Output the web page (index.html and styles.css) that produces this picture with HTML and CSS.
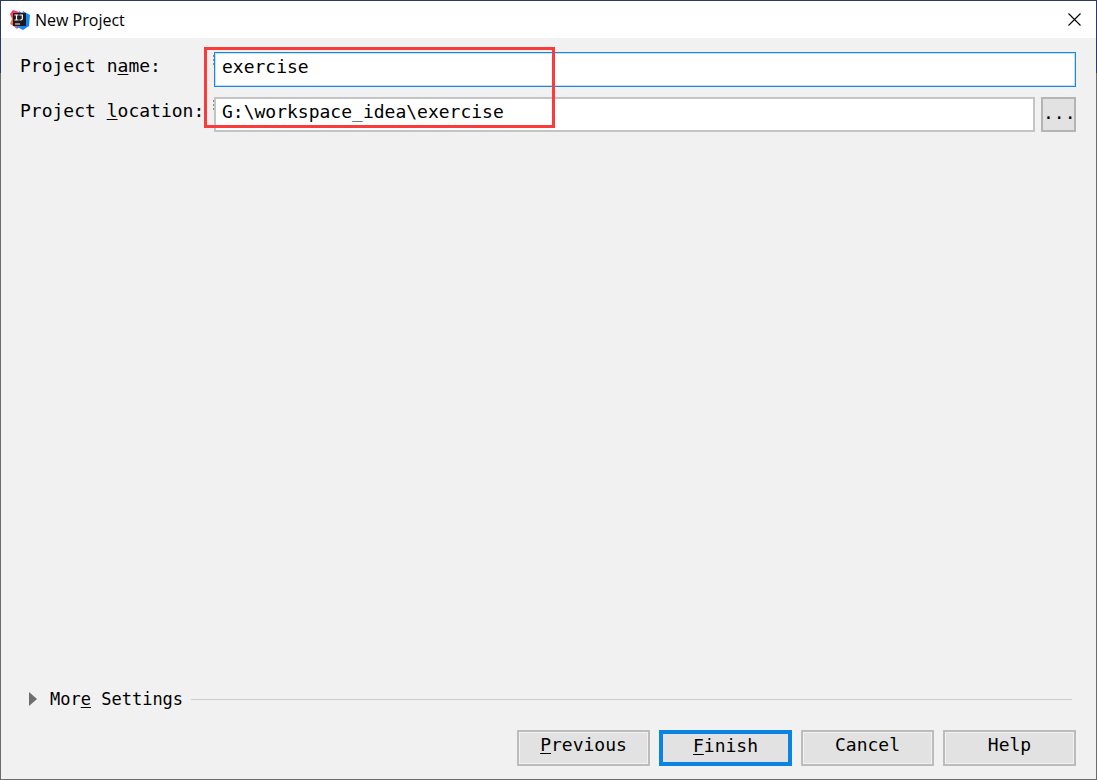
FILE: index.html
```html
<!DOCTYPE html>
<html lang="en">
<head>
  <meta charset="UTF-8">
  <title>New Project</title>
  <meta name="viewport" content="width=device-width, initial-scale=1.0">
  <link rel="stylesheet" href="styles.css">
</head>

<body>
  <div class="window">
    <header class="titlebar">
      <svg class="logo" width="20" height="20" viewBox="0 0 20 20" xmlns="http://www.w3.org/2000/svg">
        <defs>
          <linearGradient id="warm" x1="0" y1="0" x2="0" y2="1">
            <stop offset="0" stop-color="#f0317c" />
            <stop offset="0.45" stop-color="#f8543f" />
            <stop offset="1" stop-color="#fc9a2c" />
          </linearGradient>
          <linearGradient id="cool" x1="0" y1="0" x2="1" y2="1">
            <stop offset="0" stop-color="#2b9cf4" />
            <stop offset="1" stop-color="#087cfa" />
          </linearGradient>
        </defs>
        <path d="M3 0 L9 2 L9 18 L4 16 L0 14 L2 9 L0 4 Z" fill="url(#warm)" />
        <path d="M1 14 L4 13 L10 16 L7 19 Z" fill="#e0558c" />
        <path d="M13 1 L20 5 L19 16 L13 20 L7 17 Z" fill="url(#cool)" />
        <path d="M9 1 L14 4 L9 4 Z" fill="#7d60c9" />
        <rect x="3" y="3" width="13" height="13" fill="#1b1b20" />
        <path d="M4.5 5 H8.5 M6.5 5 V10 M4.5 10 H8.5 M9.5 5 H13 M12.3 5 V8.6 Q12.3 10 10.8 10 H9.5 M5 14 H10" fill="none" stroke="#fff" stroke-width="1.2" />
      </svg>
      <h1>New Project</h1>
      <button type="button" class="close" aria-label="Close">
        <svg width="13" height="13" viewBox="0 0 13 13" xmlns="http://www.w3.org/2000/svg">
          <path d="M0.5 0.5 L12.5 12.5 M12.5 0.5 L0.5 12.5" stroke="#000" stroke-width="1.1" />
        </svg>
      </button>
    </header>

    <form class="content">
      <div class="fields">
        <div class="row">
          <label for="projectName">Project n<u>a</u>me:</label>
          <div class="field">
            <input type="text" id="projectName" class="active" value="exercise">
          </div>
        </div>
        <div class="row">
          <label for="projectLocation">Project <u>l</u>ocation:</label>
          <div class="field">
            <input type="text" id="projectLocation" value="G:\workspace_idea\exercise">
            <button type="button" class="browse" aria-label="Browse">...</button>
          </div>
        </div>
        <div class="highlight"></div>
      </div>

      <div class="more">
        <button type="button" class="more-toggle">
          <svg width="8" height="14" viewBox="0 0 8 14" xmlns="http://www.w3.org/2000/svg">
            <path d="M0 0 L8 7 L0 14 Z" fill="#6e6e6e" />
          </svg>
          <span>Mor<u>e</u> Settings</span>
        </button>
        <div class="line"></div>
      </div>

      <footer class="buttons">
        <button type="button" class="btn"><u>P</u>revious</button>
        <button type="submit" class="btn primary"><u>F</u>inish</button>
        <button type="button" class="btn">Cancel</button>
        <button type="button" class="btn">Help</button>
      </footer>
    </form>
  </div>
</body>
</html>
```
FILE: styles.css
```css
* {
  margin: 0;
  padding: 0;
  box-sizing: border-box;
}
body {
  font-family: "DejaVu Sans Mono", monospace;
  font-size: 18px;
  line-height: 24px;
  color: #000;
}
button, input {
  font: inherit;
  color: inherit;
}
u {
  text-decoration-thickness: 1px;
  text-underline-offset: 2px;
}

/* window frame, the edge changes colour below the top part */
.window {
  display: flex;
  flex-direction: column;
  min-height: 100vh;
  padding: 1px;
  background: linear-gradient(#2b3a62 73px, #6b6b6b 73px);
}
.titlebar {
  display: flex;
  align-items: center;
  height: 37px;
  padding: 0 15px 0 9px;
  background-color: #fff;
}
.titlebar h1 {
  margin-left: 5px;
  font-family: "Open Sans", sans-serif;
  font-size: 16px;
  font-weight: normal;
}
.close {
  display: flex;
  margin-left: auto;
  border: none;
  background: none;
}

.content {
  flex: 1;
  display: flex;
  flex-direction: column;
  padding: 14px 20px 13px 19px;
  background-color: #f1f1f1;
}
.fields {
  position: relative;
  display: flex;
  flex-direction: column;
  gap: 10px;
}
.row {
  display: flex;
}
.row label {
  flex: 0 0 194px;
  padding-top: 2px;
  white-space: nowrap;
}
.field {
  position: relative;
  flex: 1;
  display: flex;
  gap: 6px;
}
/* dotted leftover of the focus ring */
.field::before {
  content: "";
  position: absolute;
  left: -1px;
  top: 3px;
  height: 10px;
  width: 1px;
  background: repeating-linear-gradient(#888 0 2px, transparent 2px 4px);
}
.field input {
  flex: 1;
  min-width: 0;
  height: 35px;
  padding: 0 6px 7px;
  border: 2px solid #c4c4c4;
  background-color: #fff;
  outline: none;
}
.field input.active {
  border: 1px solid #1a86dc;
  padding: 0 7px 7px;
  box-shadow: inset 0 0 0 1px #c5dff5;
}
.browse {
  width: 35px;
  height: 35px;
  padding-bottom: 4px;
  border: 2px solid #b4b4b4;
  background-color: #e2e2e2;
}
.highlight {
  position: absolute;
  top: -5px;
  left: 184px;
  width: 351px;
  height: 81px;
  border: 3px solid #fb3a3a;
  pointer-events: none;
}

.more {
  display: flex;
  align-items: center;
  gap: 8px;
  margin-top: auto;
  padding: 0 4px 0 9px;
}
.more-toggle {
  display: flex;
  align-items: center;
  gap: 13px;
  border: none;
  background: none;
  font-size: 17px;
}
.line {
  flex: 1;
  height: 1px;
  background-color: #cdcdcd;
}

.buttons {
  display: flex;
  justify-content: flex-end;
  gap: 9px;
  margin-top: 19px;
}
.btn {
  width: 133px;
  height: 36px;
  padding-bottom: 6px;
  border: 2px solid #bcbcbc;
  box-shadow: inset 0 0 0 1px #f1f1f1;
  background-color: #e2e2e2;
}
.btn.primary {
  border: 4px solid #0a84e0;
  box-shadow: none;
}
```
